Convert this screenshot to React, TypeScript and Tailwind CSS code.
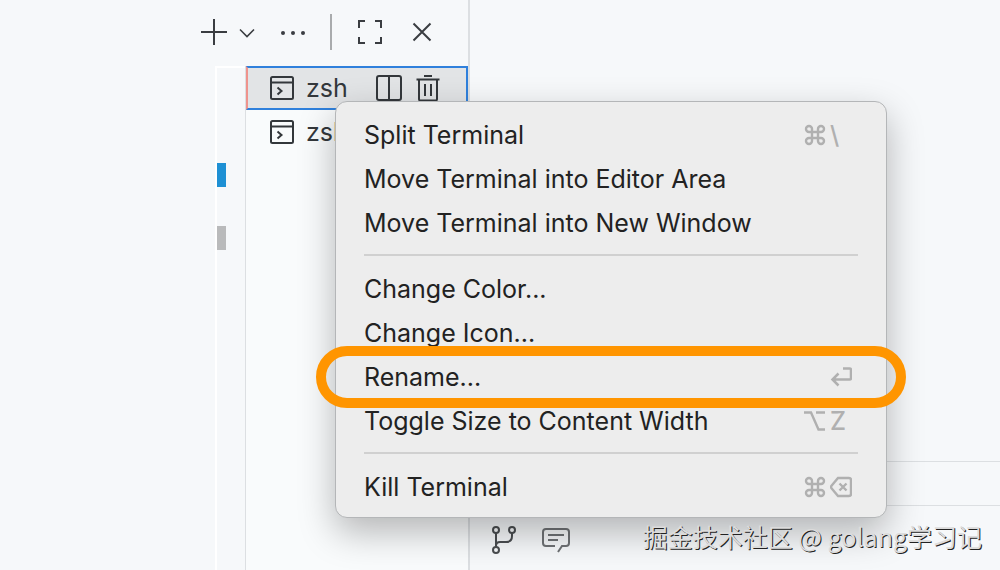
import React from "react"

type MenuItem = { label: string; keys?: React.ReactNode[] }

const Icon = ({ size = 24, stroke = 2, className = "", children }: {
  size?: number
  stroke?: number
  className?: string
  children: React.ReactNode
}) => (
  <svg
    width={size}
    height={size}
    viewBox={`0 0 ${size} ${size}`}
    fill="none"
    stroke="currentColor"
    strokeWidth={stroke}
    className={`block shrink-0 ${className}`}
    aria-hidden="true"
  >
    {children}
  </svg>
)

const TerminalIcon = () => (
  <Icon>
    <rect x="1" y="1" width="22" height="22" rx="1.5" />
    <path d="M1 6.5h22M7.5 11.5l4 3.5-4 3.5" />
  </Icon>
)

const CommandKey = () => (
  <Icon size={22} stroke={2.4}>
    <path d="M8 14V5a3 3 0 1 0-3 3h12a3 3 0 1 0-3-3v12a3 3 0 1 0 3-3H5a3 3 0 1 0 3 3z" />
  </Icon>
)

const OptionKey = () => (
  <Icon size={22} stroke={2.4}>
    <path d="M0 2.5h7l7.5 17H21M12 2.5h9" />
  </Icon>
)

const ReturnKey = () => (
  <Icon size={22} stroke={2.5}>
    <path d="M13 2.5h6.5q1.5 0 1.5 1.5V12q0 1.5-1.5 1.5H2.5M8.5 7.5l-6 6 6 6" />
  </Icon>
)

const DeleteKey = () => (
  <Icon size={22} stroke={2.4}>
    <path d="M8 2h11q2 0 2 2v14q0 2-2 2H8L1.5 12.2q-1-1.2 0-2.4zM9.5 7.5l7 7M16.5 7.5l-7 7" />
  </Icon>
)

const groups: MenuItem[][] = [
  [
    { label: "Split Terminal", keys: [<CommandKey />, "\\"] },
    { label: "Move Terminal into Editor Area" },
    { label: "Move Terminal into New Window" },
  ],
  [
    { label: "Change Color..." },
    { label: "Change Icon..." },
    { label: "Rename...", keys: [null, <ReturnKey />] },
    { label: "Toggle Size to Content Width", keys: [<OptionKey />, "Z"] },
  ],
  [{ label: "Kill Terminal", keys: [<CommandKey />, <DeleteKey />] }],
]

const Toolbar = () => (
  <div className="flex h-[66px] items-center justify-end pr-[34px] pb-0.5 text-[#3a3d41]">
    <button aria-label="New terminal">
      <Icon size={28}>
        <path d="M14 1v26M1 14h26" />
      </Icon>
    </button>
    <button aria-label="Launch profile" className="ml-2.5">
      <Icon size={18} stroke={1.6}>
        <path d="M2 6.5l7 7 7-7" />
      </Icon>
    </button>
    <button aria-label="More actions" className="ml-6">
      <Icon size={26}>
        <g fill="currentColor" stroke="none">
          <circle cx="3" cy="14" r="2" />
          <circle cx="13" cy="14" r="2" />
          <circle cx="23" cy="14" r="2" />
        </g>
      </Icon>
    </button>
    <div className="ml-6 h-9 w-0.5 bg-[#a9abad]"></div>
    <button aria-label="Maximize panel" className="ml-[26px]">
      <Icon>
        <path d="M1 8V1h6M17 1h6v7M23 17v6h-6M7 23H1v-6" />
      </Icon>
    </button>
    <button aria-label="Close panel" className="ml-7">
      <Icon>
        <path d="M3.5 3.5l17 17M20.5 3.5l-17 17" />
      </Icon>
    </button>
  </div>
)

const TerminalTabs = () => (
  <ul className="flex-1 border-l border-[#dcdfe2] bg-[#f9fbfc] text-[25px] leading-8 text-[#33373b]">
    <li className="flex h-11 items-center border-2 border-[#2f80dc] border-l-[#ef938d] bg-[#e2e4e6] pr-[25px] pl-[22px]">
      <button className="flex flex-1 items-center gap-3">
        <TerminalIcon />
        zsh
      </button>
      <button aria-label="Split" className="mr-3">
        <Icon size={28}>
          <rect x="2" y="2" width="24" height="24" rx="2" />
          <path d="M14 2v24" />
        </Icon>
      </button>
      <button aria-label="Kill">
        <Icon size={26}>
          <path d="M1.5 4.5h23M9 1h8M4 4.5V24q0 1.5 1.5 1.5h15q1.5 0 1.5-1.5V4.5M10 9v12M16 9v12" />
        </Icon>
      </button>
    </li>
    <li className="flex h-11 items-center pl-6">
      <button className="flex items-center gap-3">
        <TerminalIcon />
        zsh
      </button>
    </li>
  </ul>
)

const ContextMenu = () => (
  <div
    role="menu"
    className="absolute top-[101px] left-[335px] w-[552px] rounded-xl border border-[#b4b6b8] bg-[#ededed] pt-[11px] pb-2 text-[25px] leading-8 text-[#222] shadow-[0_14px_36px_rgba(0,0,0,0.28)]"
  >
    {groups.map((group, g) => (
      <React.Fragment key={g}>
        {g > 0 && (
          <div className="px-7 pt-[9px] pb-[11px]">
            <hr className="h-0.5 border-0 bg-[#d0d0d0]" />
          </div>
        )}
        {group.map(item => (
          <button
            key={item.label}
            role="menuitem"
            className="relative flex h-11 w-full items-center justify-between px-7"
          >
            {item.label}
            {item.keys && (
              <span className="mr-1.5 grid grid-cols-[22px_22px] items-center gap-1 text-[#b0b0b0]">
                {item.keys.map((k, i) => (
                  <span key={i} className="text-left font-medium">{k}</span>
                ))}
              </span>
            )}
            {item.label === "Rename..." && (
              <span className="absolute -inset-x-5 -inset-y-[9px] z-10 rounded-full border-10 border-[#ff9500]"></span>
            )}
          </button>
        ))}
      </React.Fragment>
    ))}
  </div>
)

const StatusBar = () => (
  <footer className="flex h-[65px] items-center gap-6 border-t border-[#dcdfe2] pt-1 pl-5 text-[#4a4d50]">
    <button aria-label="Source control">
      <Icon size={28}>
        <circle cx="6" cy="4" r="3" />
        <circle cx="22" cy="4" r="3" />
        <circle cx="6" cy="24" r="3" />
        <path d="M6 7v14M22 7v3q0 6-6 6h-6q-4 0-4 4" />
      </Icon>
    </button>
    <button aria-label="Comments">
      <Icon size={28} className="text-[#6f7275]">
        <path d="M13 20H4q-3 0-3-3V6q0-3 3-3h20q3 0 3 3v11q0 3-3 3h-4l-4 6M6 9h16M6 14h10" />
      </Icon>
    </button>
  </footer>
)

const App = () => (
  <div className="relative flex h-screen overflow-hidden bg-[#f6f8fa] font-['Inter','Noto_Sans_CJK_SC',sans-serif]">
    <section className="flex w-[470px] shrink-0 flex-col border-r-2 border-[#dcdfe2]">
      <Toolbar />
      <div className="flex flex-1">
        <div className="ml-[215px] w-[30px] border-t-2 border-l-2 border-white pt-[95px]">
          <div className="h-6 w-[9px] bg-[#1e90d4]"></div>
          <div className="mt-[39px] h-6 w-[9px] bg-[#b9babb]"></div>
        </div>
        <TerminalTabs />
      </div>
    </section>
    <main className="flex flex-1 flex-col">
      <div className="flex-1"></div>
      <div className="h-11 border-t border-[#dcdfe2]"></div>
      <StatusBar />
    </main>
    <ContextMenu />
    <p className="absolute right-[18px] bottom-[18px] font-['Noto_Sans_CJK_SC',sans-serif] text-[25px] leading-8 text-[#dcdcdc] [text-shadow:1px_1px_0_#222]">
      掘金技术社区 @ golang学习记
    </p>
  </div>
)

export default App
